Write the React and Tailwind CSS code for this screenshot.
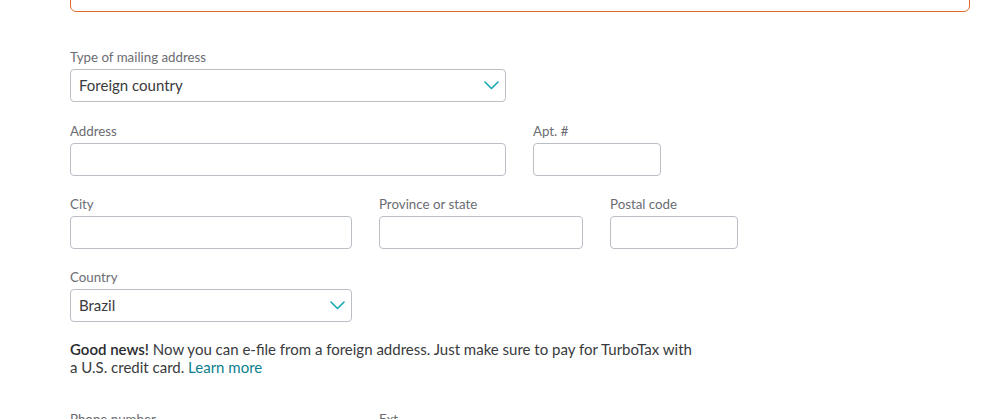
const FONT = { fontFamily: 'Lato, "Open Sans", sans-serif' };

function Chevron() {
  return (
    <svg width="15" height="9" viewBox="0 0 15 9" fill="none" className="shrink-0">
      <path d="M1 1l6.5 6.5L14 1" stroke="#17a8b5" strokeWidth="1.6" strokeLinecap="round" strokeLinejoin="round" />
    </svg>
  );
}

function Field({ label, width, children }) {
  return (
    <div className="flex flex-col" style={{ width }}>
      <label className="text-[13.3px] leading-4 text-[#6b6c72] h-4 mb-[4px]">{label}</label>
      {children ?? <div className="h-[33px] rounded-[4px] border border-[#babec5] bg-white" />}
    </div>
  );
}

function Select({ value }) {
  return (
    <div className="h-[33px] rounded-[4px] border border-[#babec5] bg-white flex items-center justify-between pl-[8px] pr-[6px]">
      <span className="text-[15px] text-[#393a3d]">{value}</span>
      <Chevron />
    </div>
  );
}

export default function App() {
  return (
    <div className="w-[999px] h-[419px] overflow-hidden bg-white" style={FONT}>
      <div className="ml-[70px] w-[900px] h-[42px] -mt-[30px] rounded-[6px] border border-[#dd6b2c]" />

      <div className="pl-[70px] pt-[37px] flex flex-col gap-[20px]">
        <Field label="Type of mailing address" width={436}>
          <Select value="Foreign country" />
        </Field>

        <div className="flex gap-[27px] mt-[1px]">
          <Field label="Address" width={436} />
          <Field label="Apt. #" width={128} />
        </div>

        <div className="flex gap-[27px]">
          <Field label="City" width={282} />
          <Field label="Province or state" width={204} />
          <Field label="Postal code" width={128} />
        </div>

        <Field label="Country" width={282}>
          <Select value="Brazil" />
        </Field>

        <p className="w-[626px] text-[15px] leading-[18px] text-[#393a3d] -mt-[2px]">
          <span className="text-[#2a2b2e] font-semibold">Good news!</span> Now you can e-file from a foreign address. Just make sure to pay for TurboTax with a U.S. credit card.{' '}
          <a className="text-[#0b7f8e]">Learn more</a>
        </p>

        <div className="flex gap-[27px] mt-[15px]">
          <Field label="Phone number" width={282} />
          <Field label="Ext." width={128} />
        </div>
      </div>
    </div>
  );
}
